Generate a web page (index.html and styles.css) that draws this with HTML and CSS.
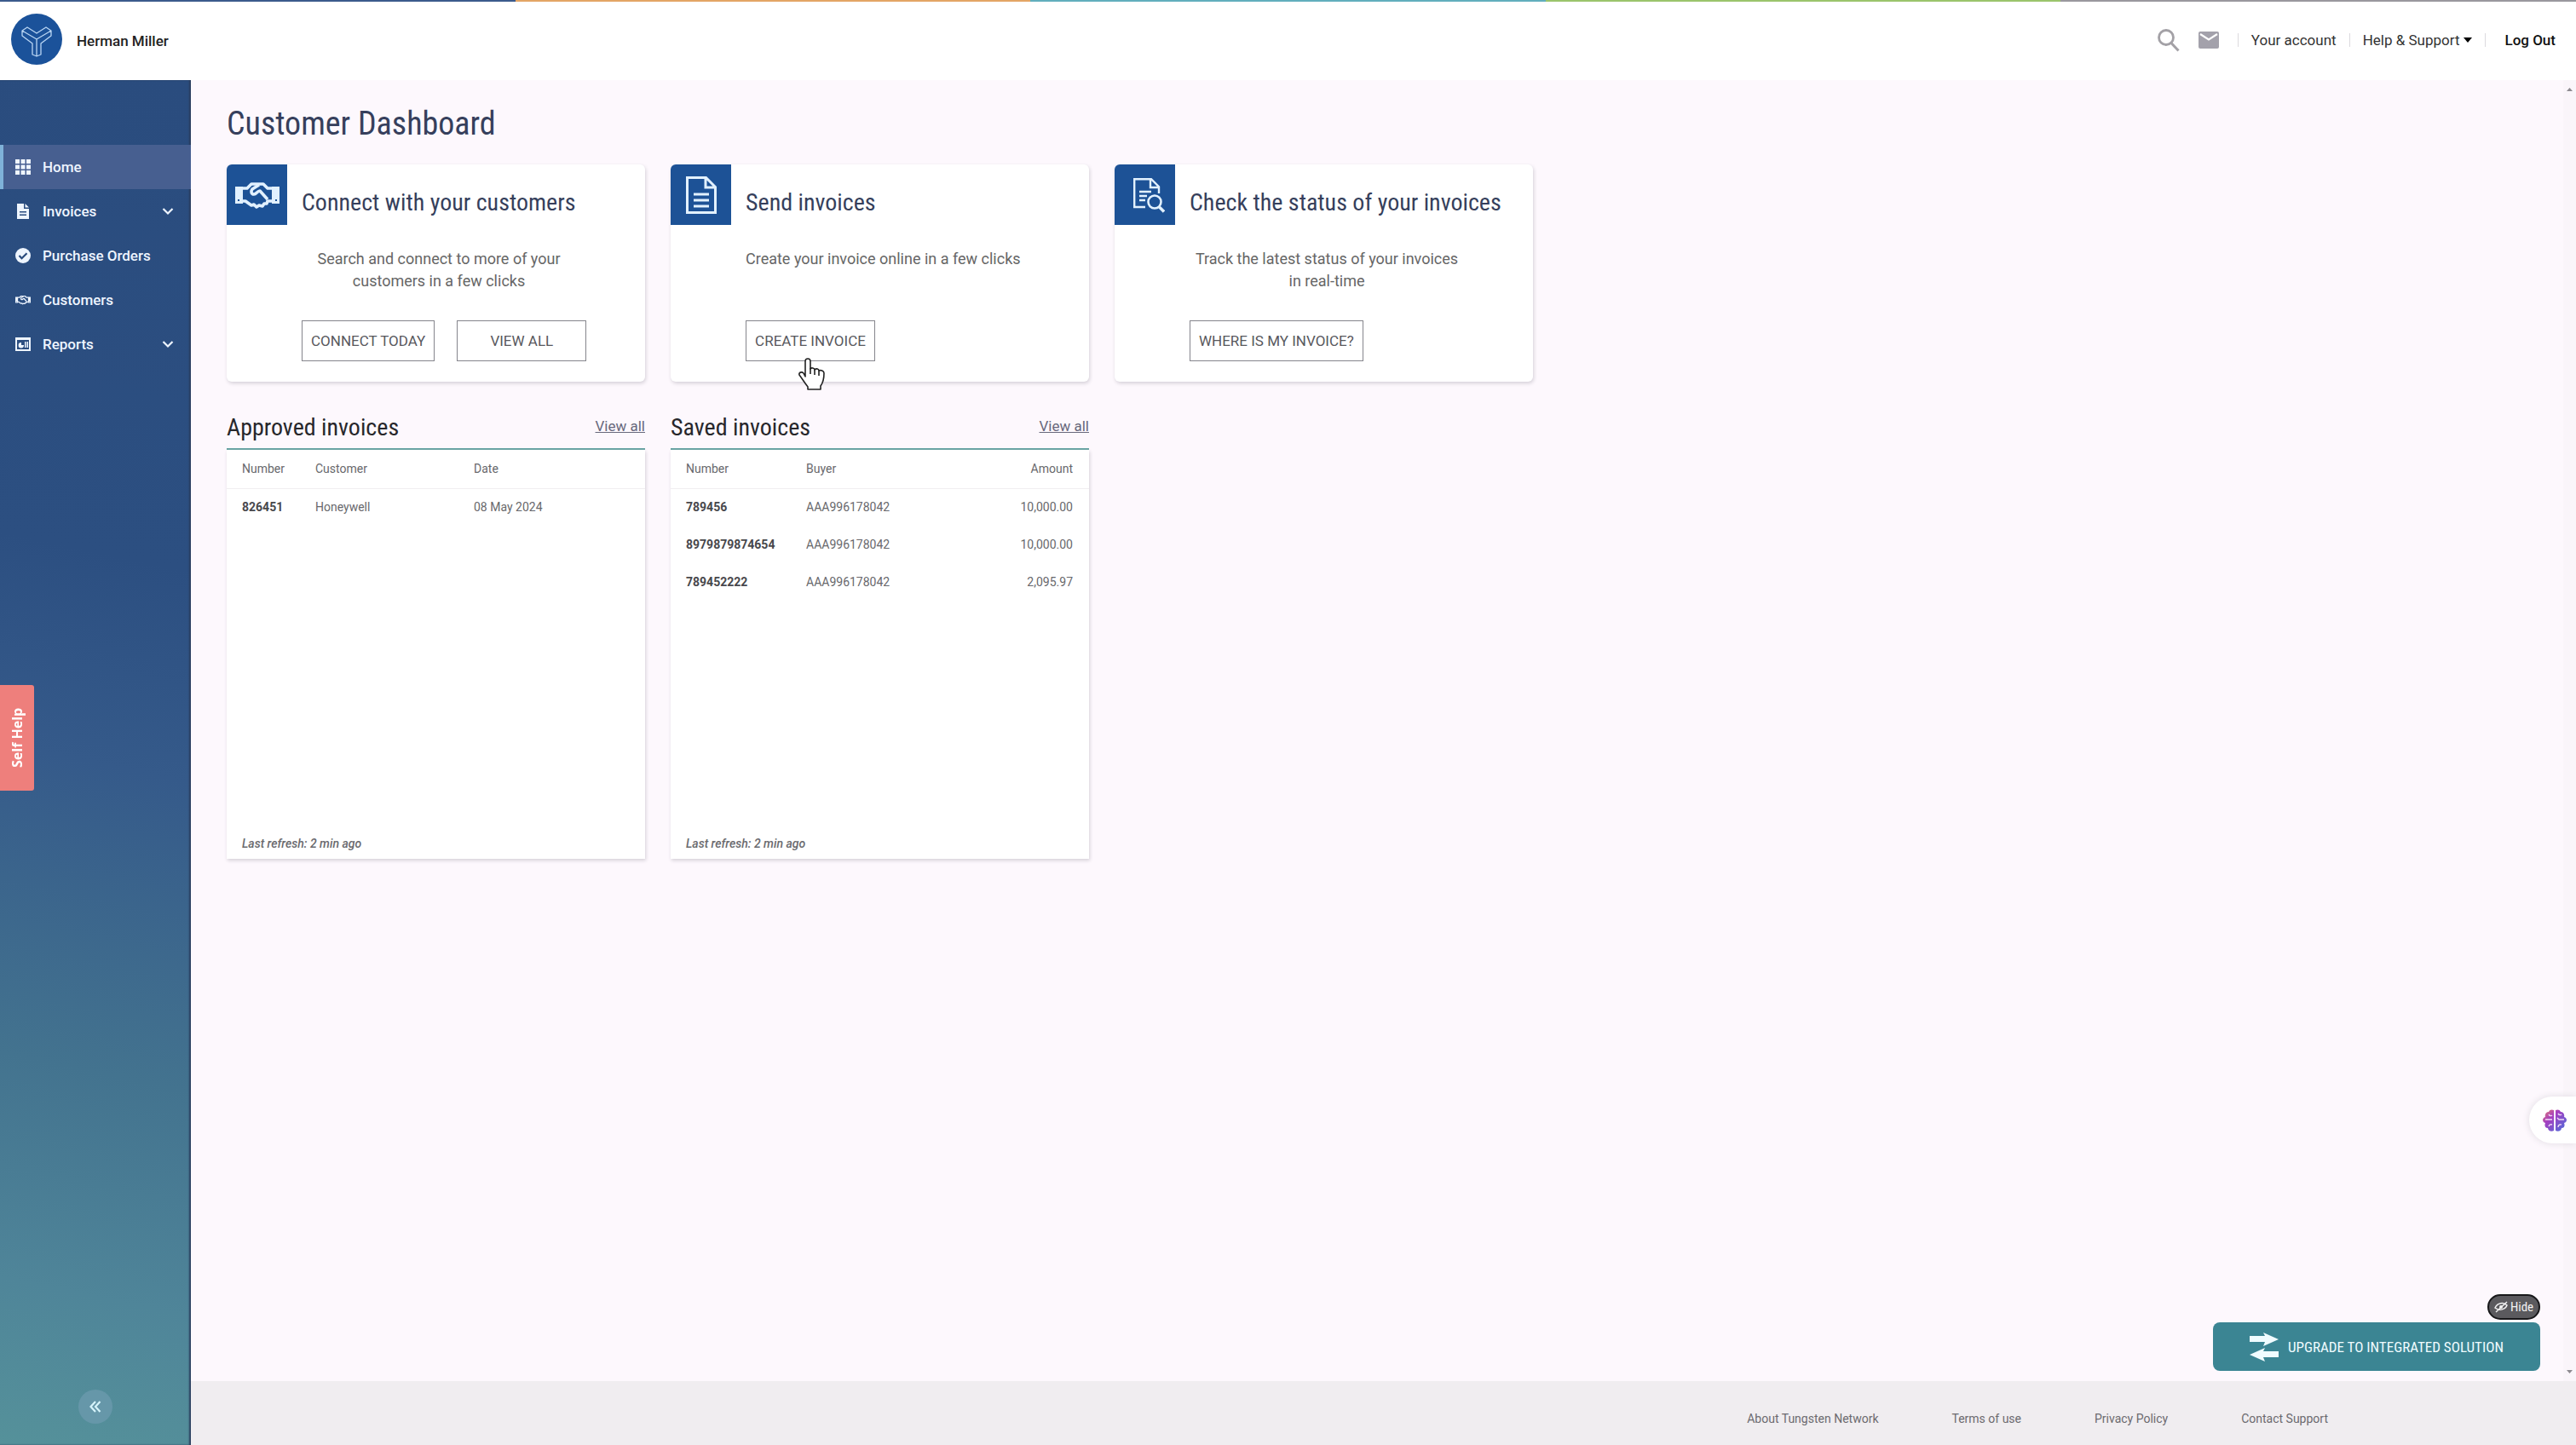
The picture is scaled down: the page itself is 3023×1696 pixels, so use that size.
FILE: index.html
```html
<!DOCTYPE html>
<html lang="en">

<head>
    <meta charset="UTF-8">
    <meta name="viewport" content="width=device-width, initial-scale=1.0">
    <title>Customer Dashboard</title>
    <link rel="stylesheet" href="styles.css">
</head>

<body>
    <!-- shared icons -->
    <svg class="defs" aria-hidden="true">
        <symbol id="chevron" viewBox="0 0 14 10">
            <path d="M1.5 2l5.5 5.5L12.5 2" fill="none" stroke="currentColor" stroke-width="2.2" />
        </symbol>
        <symbol id="handshake" viewBox="0 0 52 32">
            <path fill="currentColor" d="M0 6h9v20H0zM43 6h9v20h-9z" />
            <g fill="none" stroke="currentColor" stroke-width="3.6" stroke-linejoin="round">
                <path d="M8 8h6l5-5h14l5 5h6" />
                <path d="M8 23h4l7 5 3-1 3 3 3-2 4 1 2-3 3 0 1-3 6 0" />
                <path d="M28 4l-8 5c-2 3-1 6 2 6 3 0 4-4 7-4l9 10" />
            </g>
            <path fill="#1d5296" d="M3 21h2v2H3zM47 21h2v2h-2z" />
        </symbol>
    </svg>

    <div class="stripe"><i></i><i></i><i></i><i></i><i></i></div>
    <header class="topbar">
        <svg class="logo" viewBox="0 0 60 60">
            <circle cx="30" cy="30" r="30" fill="#1b529a" />
            <path d="M13 20v6l12 9v13l5 2 5-2V35l12-9v-6l-6-4-11 7-11-7zM13 20l17 10 17-10M30 30v20" fill="none" stroke="#b9d5f3" stroke-width="1.3" stroke-linejoin="round" />
        </svg>
        <span class="company">Herman Miller</span>
        <nav class="top-links">
            <button class="icon-btn" aria-label="Search">
                <svg width="26" height="27" viewBox="0 0 26 27"><circle cx="10" cy="10" r="8.5" fill="none" stroke="#a3a1a6" stroke-width="2.8" /><path d="M15.5 16l9 9.5" stroke="#a3a1a6" stroke-width="3" /></svg>
            </button>
            <button class="icon-btn" aria-label="Messages">
                <svg width="24" height="20" viewBox="0 0 24 20"><rect width="24" height="20" rx="2" fill="#a3a1ab" /><path d="M2 3l10 6.5L22 3" fill="none" stroke="#fff" stroke-width="2.2" /></svg>
            </button>
            <a class="top-link" href="#">Your account</a>
            <a class="top-link" href="#">Help &amp; Support<svg class="caret" viewBox="0 0 10 6"><path d="M0 0h10L5 6z" /></svg></a>
            <a class="top-link logout" href="#">Log Out</a>
        </nav>
    </header>

    <div class="shell">
        <aside class="sidebar">
            <nav class="menu">
                <a class="menu-item active" href="#">
                    <svg class="menu-icon" viewBox="0 0 18 18"><path fill="currentColor" d="M0 0h5v5H0zM6.500 0h5v5h-5zM13 0h5v5h-5zM0 6.500h5v5H0zM6.500 6.500h5v5h-5zM13 6.500h5v5h-5zM0 13h5v5H0zM6.500 13h5v5h-5zM13 13h5v5h-5z" /></svg>
                    Home
                </a>
                <a class="menu-item" href="#">
                    <svg class="menu-icon" viewBox="0 0 18 18"><path fill="currentColor" fill-rule="evenodd" d="M2 0h8v6h6v12H2zM5 9v1.500h8V9zM5 12.500V14h8v-1.500zM11.500 0L16 4.500h-4.500z" /></svg>
                    Invoices
                    <svg class="chevron"><use href="#chevron" /></svg>
                </a>
                <a class="menu-item" href="#">
                    <svg class="menu-icon" viewBox="0 0 18 18"><circle cx="9" cy="9" r="9" fill="currentColor" /><path d="M4.500 9l3 3.200 6-6" fill="none" stroke="#284a7d" stroke-width="2.2" /></svg>
                    Purchase Orders
                </a>
                <a class="menu-item" href="#">
                    <svg class="menu-icon"><use href="#handshake" /></svg>
                    Customers
                </a>
                <a class="menu-item" href="#">
                    <svg class="menu-icon" viewBox="0 0 18 18"><path fill="currentColor" fill-rule="evenodd" d="M0 1h18v16H0zM2 4v11h14V4z" /><path fill="currentColor" d="M7 7v3h3a3.200 3.200 0 1 1-3-3zM11 6h1.500v7H11zM13.500 6H15v7h-1.500z" /></svg>
                    Reports
                    <svg class="chevron"><use href="#chevron" /></svg>
                </a>
            </nav>
            <button class="collapse" aria-label="Collapse menu">
                <svg width="14" height="14" viewBox="0 0 14 14"><path d="M7 1L1.500 7 7 13M12.500 1L7 7l5.500 6" fill="none" stroke="#d5f3fa" stroke-width="2.2" /></svg>
            </button>
        </aside>

        <div class="page">
            <main class="content">
                <h1>Customer Dashboard</h1>
                <section class="grid actions">
                    <article class="card">
                        <div class="badge"><svg width="52" height="32"><use href="#handshake" /></svg></div>
                        <div class="card-body">
                            <h2>Connect with your customers</h2>
                            <p>Search and connect to more of your<br>customers in a few clicks</p>
                            <div class="buttons">
                                <button class="btn">CONNECT TODAY</button>
                                <button class="btn">VIEW ALL</button>
                            </div>
                        </div>
                    </article>
                    <article class="card">
                        <div class="badge">
                            <svg width="36" height="44" viewBox="0 0 36 44"><path d="M1.500 1.500h22l11 11v30h-33zM23 2v11h11M9 21h18M9 28h18M9 35h18" fill="none" stroke="currentColor" stroke-width="3" /></svg>
                        </div>
                        <div class="card-body">
                            <h2>Send invoices</h2>
                            <p>Create your invoice online in a few clicks</p>
                            <div class="buttons">
                                <button class="btn">CREATE INVOICE</button>
                                <svg class="cursor" viewBox="0 0 31 38"><path d="M8 22V4c0-4 6-4 6 0v9c1-2 5-1 5 1 2-2 5-1 5 1 2-1 6 0 6 3 0 8-1 11-4 15v4H11v-3C7 29 4 24 1 20c-1-3 3-4 5-2z" fill="#fff" stroke="#222" stroke-width="1.6" stroke-linejoin="round" /><path d="M14 12v7M19 14v6M24 15v6" stroke="#222" stroke-width="1.6" /></svg>
                            </div>
                        </div>
                    </article>
                    <article class="card">
                        <div class="badge">
                            <svg class="status-icon" width="37" height="41" viewBox="0 0 37 41"><path d="M14 34H1.200V1.200H21l9 9V18M20 1.500V11h10M7 16h14M7 21h9M7 26h7" fill="none" stroke="currentColor" stroke-width="2.4" /><circle cx="25" cy="28" r="7.5" fill="none" stroke="currentColor" stroke-width="2.6" /><path d="M30 33.500l6 6" stroke="currentColor" stroke-width="3.4" /></svg>
                        </div>
                        <div class="card-body">
                            <h2>Check the status of your invoices</h2>
                            <p>Track the latest status of your invoices<br>in real-time</p>
                            <div class="buttons">
                                <button class="btn">WHERE IS MY INVOICE?</button>
                            </div>
                        </div>
                    </article>
                </section>

                <section class="grid lists">
                    <article class="list">
                        <div class="list-head">
                            <h2>Approved invoices</h2>
                            <a href="#">View all</a>
                        </div>
                        <div class="panel">
                            <table class="approved">
                                <thead>
                                    <tr><th>Number</th><th>Customer</th><th>Date</th></tr>
                                </thead>
                                <tbody>
                                    <tr><td class="number">826451</td><td>Honeywell</td><td>08 May 2024</td></tr>
                                </tbody>
                            </table>
                            <p class="refresh">Last refresh: 2 min ago</p>
                        </div>
                    </article>
                    <article class="list">
                        <div class="list-head">
                            <h2>Saved invoices</h2>
                            <a href="#">View all</a>
                        </div>
                        <div class="panel">
                            <table class="saved">
                                <thead>
                                    <tr><th>Number</th><th>Buyer</th><th class="amount">Amount</th></tr>
                                </thead>
                                <tbody>
                                    <tr><td class="number">789456</td><td>AAA996178042</td><td class="amount">10,000.00</td></tr>
                                    <tr><td class="number">8979879874654</td><td>AAA996178042</td><td class="amount">10,000.00</td></tr>
                                    <tr><td class="number">789452222</td><td>AAA996178042</td><td class="amount">2,095.97</td></tr>
                                </tbody>
                            </table>
                            <p class="refresh">Last refresh: 2 min ago</p>
                        </div>
                    </article>
                </section>

                <div class="scrollbar">
                    <svg width="7" height="4" viewBox="0 0 7 4"><path d="M0 4h7L3.500 0z" fill="#8d8a90" /></svg>
                    <svg width="7" height="4" viewBox="0 0 7 4"><path d="M0 0h7L3.500 4z" fill="#8d8a90" /></svg>
                </div>
                <div class="upgrade-box">
                    <button class="hide">
                        <svg width="16" height="14" viewBox="0 0 16 14"><path d="M1 8c3-6 10-7 14-3-2 5-9 7-14 3zM2 13L15 1" fill="none" stroke="currentColor" stroke-width="1.5" /><circle cx="8" cy="7" r="2" fill="currentColor" /></svg>
                        Hide
                    </button>
                    <button class="upgrade">
                        <svg width="34" height="34" viewBox="0 0 34 34"><path fill="currentColor" d="M0 4h18l-2-4 18 8-18 8 2-5H0zM34 22H16l2-4L0 26l18 8-2-5h18z" /></svg>
                        UPGRADE TO INTEGRATED SOLUTION
                    </button>
                </div>
            </main>
            <footer class="footer">
                <a href="#">About Tungsten Network</a>
                <a href="#">Terms of use</a>
                <a href="#">Privacy Policy</a>
                <a href="#">Contact Support</a>
            </footer>
        </div>
    </div>

    <button class="self-help">Self Help</button>
    <button class="assistant" aria-label="Assistant">
        <svg width="28" height="26" viewBox="0 0 28 26">
            <defs>
                <linearGradient id="brain" x1="0" y1="0" x2="1" y2="1">
                    <stop offset="0" stop-color="#e8836c" />
                    <stop offset="0.35" stop-color="#a63fc0" />
                    <stop offset="1" stop-color="#4a6fdc" />
                </linearGradient>
            </defs>
            <path fill="url(#brain)" d="M13 1v24c-3 2-7 0-7-3-4 0-4-4-3-6-4-1-4-6 0-7-1-3 1-6 4-6 1-3 4-3 6-2zM15 1v24c3 2 7 0 7-3 4 0 4-4 3-6 4-1 4-6 0-7 1-3-1-6-4-6-1-3-4-3-6-2z" />
            <path d="M3 12h8M7 6c2 3 4 1 4 1M7 20c1-3 4-2 4-2M25 12h-6l-2-2M18 5c2 3 4 1 4 1M18 21c0-4 4-3 4-3" fill="none" stroke="#f1dcf7" stroke-width="1.4" />
        </svg>
    </button>
</body>

</html>
```
FILE: styles.css
```css
* {
    box-sizing: border-box;
}
body {
    margin: 0;
    min-height: 100vh;
    display: flex;
    flex-direction: column;
    font-family: Roboto, sans-serif;
    font-size: 17px;
    color: #333;
    background-color: #fdf8fd;
}
h1, h2, p {
    margin: 0;
    font-weight: 400;
}
h1, h2, .upgrade, .hide {
    font-family: "Roboto Condensed", Roboto, sans-serif;
}
a {
    color: inherit;
    text-decoration: none;
}
button {
    font-family: inherit;
    padding: 0;
    border: 0;
    background: none;
    cursor: pointer;
}
svg {
    flex: none;
}
.defs {
    position: absolute;
    width: 0;
    height: 0;
}

/* top bar */
.stripe {
    display: flex;
    height: 2px;
}
.stripe i {
    flex: 1;
    background-color: #3b5a8c;
}
.stripe i:nth-child(2) {
    background-color: #e3a565;
}
.stripe i:nth-child(3) {
    background-color: #62aebd;
}
.stripe i:nth-child(4) {
    background-color: #9bc46c;
}
.stripe i:nth-child(5) {
    background-color: #9a989e;
}
.topbar {
    display: flex;
    align-items: center;
    height: 92px;
    padding: 0 24px 0 13px;
    background-color: #fff;
}
.logo {
    width: 60px;
    height: 60px;
    margin-bottom: 4px;
}
.company {
    margin-left: 17px;
    font-weight: 500;
    color: #222;
}
.top-links {
    display: flex;
    align-items: center;
    margin-left: auto;
    margin-bottom: 2px;
}
.icon-btn {
    display: flex;
    margin-right: 22px;
}
.top-link {
    display: flex;
    align-items: center;
    height: 16px;
    padding: 0 15px;
    border-left: 1px solid #dcdade;
}
.caret {
    width: 10px;
    height: 6px;
    margin-left: 5px;
}
.logout {
    padding: 0 0 0 22px;
    font-weight: 500;
    color: #111;
}

/* side menu */
.shell {
    display: flex;
    flex: 1;
}
.sidebar {
    display: flex;
    flex-direction: column;
    align-items: center;
    width: 224px;
    padding: 76px 0 25px;
    background: linear-gradient(192deg, #2a4c7e 0%, #2c4f81 35%, #355a8a 50%, #43738f 72%, #4f8599 88%, #55919a 100%);
    box-shadow: inset -2px 0 2px #2b3e5e;
}
.menu {
    width: 100%;
}
.menu-item {
    display: flex;
    align-items: center;
    height: 52px;
    padding: 0 20px 0 18px;
    color: #eef5ff;
    font-weight: 500;
}
.active {
    padding-left: 14px;
    border-left: 4px solid #7fb2d8;
    background-color: #475f90;
}
.menu-icon {
    width: 18px;
    height: 18px;
    margin-right: 14px;
}
.chevron {
    width: 14px;
    height: 10px;
    margin-left: auto;
}
.collapse {
    display: flex;
    align-items: center;
    justify-content: center;
    width: 40px;
    height: 40px;
    margin-top: auto;
    border-radius: 50%;
    background-color: #6697a9;
}

/* dashboard */
.page {
    display: flex;
    flex-direction: column;
    flex: 1;
}
.content {
    position: relative;
    flex: 1;
    padding: 28px 42px;
}
h1 {
    font-size: 38px;
    line-height: 46px;
    color: #363f5c;
}
.grid {
    display: grid;
    grid-template-columns: repeat(auto-fill, 491px);
    gap: 30px;
}
.actions {
    margin-top: 25px;
}
.card {
    display: flex;
    min-height: 255px;
    border-radius: 6px;
    background-color: #fff;
    box-shadow: 1px 2px 4px #d5d0d8;
}
.badge {
    display: flex;
    align-items: center;
    justify-content: center;
    width: 71px;
    height: 71px;
    border-radius: 6px 0 0 0;
    color: #e2f1ff;
    background-color: #1d5296;
}
.status-icon {
    margin: 2px 0 0 10px;
}
.card-body {
    display: flex;
    flex-direction: column;
    padding: 28px 0 24px 17px;
}
h2 {
    font-size: 28px;
    line-height: 34px;
    color: #363f5c;
    white-space: nowrap;
}
.card p {
    width: 322px;
    margin-top: 36px;
    font-size: 18px;
    line-height: 26px;
    text-align: center;
    white-space: nowrap;
    color: #666;
}
.buttons {
    position: relative;
    display: flex;
    gap: 26px;
    margin-top: auto;
}
.btn {
    height: 48px;
    min-width: 152px;
    padding: 0 10px;
    border: 1px solid #85858c;
    font-size: 17px;
    color: #58585d;
}
.cursor {
    position: absolute;
    left: 62px;
    top: 44px;
    width: 31px;
    height: 38px;
}

/* invoice lists */
.lists {
    margin-top: 37px;
}
.list-head {
    display: flex;
    justify-content: space-between;
    height: 43px;
    border-bottom: 2px solid #62a09f;
}
.list-head h2 {
    color: #27272b;
}
.list-head a {
    margin-top: 5px;
    text-decoration: underline;
    color: #68687c;
}
.panel {
    display: flex;
    flex-direction: column;
    height: 480px;
    background-color: #fff;
    box-shadow: 1px 2px 4px #d5d0d8;
    font-size: 14px;
}
table {
    width: 100%;
    table-layout: fixed;
    border-collapse: collapse;
    text-align: left;
    color: #68686c;
}
th {
    height: 45px;
    padding: 0;
    border-bottom: 1px solid #f0eef1;
    font-weight: 400;
}
td {
    height: 44px;
    padding: 0;
}
th:first-child, td:first-child {
    padding-left: 18px;
}
.approved th:first-child {
    width: 104px;
}
.approved th:nth-child(2) {
    width: 186px;
}
.saved th:first-child {
    width: 159px;
}
.number {
    font-weight: 700;
    color: #48484c;
}
th.amount, td.amount {
    padding-right: 19px;
    text-align: right;
}
.refresh {
    margin-top: auto;
    padding: 0 18px 10px;
    font-weight: 500;
    font-style: italic;
    color: #6a6a6e;
}

/* bottom */
.footer {
    display: flex;
    align-items: center;
    justify-content: flex-end;
    gap: 86px;
    height: 75px;
    padding: 12px 291px 0 0;
    font-size: 14px;
    color: #6c6a6f;
    background-color: #f0edf0;
}
.scrollbar {
    position: absolute;
    top: 0;
    right: 0;
    bottom: 0;
    display: flex;
    flex-direction: column;
    align-items: center;
    justify-content: space-between;
    width: 15px;
    padding: 9px 0;
    background-color: #faf5fa;
}
.upgrade-box {
    position: absolute;
    right: 42px;
    bottom: 12px;
    display: flex;
    flex-direction: column;
    align-items: flex-end;
    gap: 3px;
}
.hide {
    display: flex;
    align-items: center;
    justify-content: center;
    gap: 3px;
    width: 62px;
    height: 30px;
    border: 2px solid #18181a;
    border-radius: 15px;
    font-size: 15px;
    color: #f2f2f2;
    background-color: #5b5a5e;
}
.upgrade {
    display: flex;
    align-items: center;
    justify-content: center;
    gap: 11px;
    width: 384px;
    height: 57px;
    border-radius: 8px;
    font-size: 17px;
    color: #f0fcff;
    background-color: #3b8593;
}
.self-help {
    position: fixed;
    left: 0;
    top: 804px;
    width: 40px;
    height: 124px;
    border-radius: 3px 0 0 3px;
    writing-mode: vertical-rl;
    rotate: 180deg;
    font-family: "Open Sans", sans-serif;
    font-size: 16px;
    font-weight: 700;
    color: #fff;
    background-color: #ee7f7c;
}
.assistant {
    position: fixed;
    right: 0;
    top: 1287px;
    display: flex;
    align-items: center;
    width: 55px;
    height: 55px;
    padding-left: 16px;
    border-radius: 28px 0 0 28px;
    background-color: #fff;
    box-shadow: 0 0 8px #e0dbe2;
}
```
